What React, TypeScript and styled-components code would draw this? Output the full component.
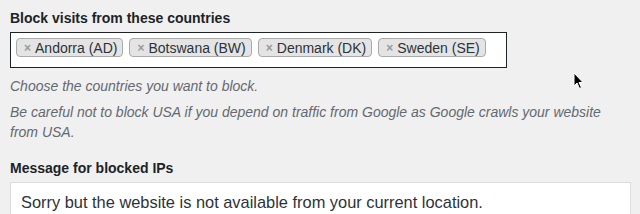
import styled, { createGlobalStyle } from "styled-components";

const GlobalStyle = createGlobalStyle`
  html, body {
    margin: 0;
    padding: 0;
    background: #f0f0f1;
  }
  body {
    font-family: "Liberation Sans", Arial, sans-serif;
    color: #1d2327;
  }
`;

const Page = styled.div`
  position: relative;
  width: 640px;
  height: 214px;
  overflow: hidden;
  padding: 8px 9px 0 10px;
  box-sizing: border-box;
`;

const Label = styled.div<{ $top?: number }>`
  font-size: 14px;
  font-weight: bold;
  line-height: 20px;
  margin-top: ${(p) => p.$top ?? 0}px;
  margin-bottom: 4px;
`;

const SelectBox = styled.div`
  width: 497px;
  height: 36px;
  box-sizing: border-box;
  border: 1px solid #1d2327;
  background: #fff;
  padding: 5px 5px;
  display: flex;
  gap: 6px;
  align-items: flex-start;
`;

const Tag = styled.span`
  display: inline-flex;
  align-items: center;
  height: 19px;
  box-sizing: border-box;
  padding: 0 5px 0 7px;
  background: #e4e4e4;
  border: 1px solid #aaa;
  border-radius: 4px;
  font-size: 14px;
  color: #2c3338;
  white-space: nowrap;
`;

const Remove = styled.span`
  color: #999;
  font-size: 12px;
  font-weight: bold;
  margin-right: 4px;
`;

const Description = styled.p<{ $top: number }>`
  margin: ${(p) => p.$top}px 0 0;
  font-size: 14px;
  font-style: italic;
  line-height: 20px;
  color: #646970;
  max-width: 618px;
`;

const MessageBox = styled.div`
  width: 621px;
  height: 60px;
  box-sizing: border-box;
  border: 1px solid #dcdcde;
  border-bottom: none;
  background: #fff;
  padding: 7px 10px;
  font-size: 16.4px;
  line-height: 24px;
  color: #2c3338;
`;

const Cursor = styled.svg`
  position: absolute;
  left: 573px;
  top: 72px;
`;

const countries = ["Andorra (AD)", "Botswana (BW)", "Denmark (DK)", "Sweden (SE)"];

export default function App() {
  return (
    <>
      <GlobalStyle />
      <Page>
        <Label>Block visits from these countries</Label>
        <SelectBox>
          {countries.map((c) => (
            <Tag key={c}>
              <Remove>×</Remove>
              {c}
            </Tag>
          ))}
        </SelectBox>
        <Description $top={8}>Choose the countries you want to block.</Description>
        <Description $top={6}>
          Be careful not to block USA if you depend on traffic from Google as Google crawls your
          website from USA.
        </Description>
        <Label $top={16}>Message for blocked IPs</Label>
        <MessageBox>Sorry but the website is not available from your current location.</MessageBox>
        <Cursor width="12" height="18" viewBox="0 0 12 18">
          <path d="M1 1 L1 14 L4 11 L6.5 16.5 L8.5 15.5 L6 10.5 L10 10.5 Z" fill="#000" stroke="#fff" strokeWidth="1" />
        </Cursor>
      </Page>
    </>
  );
}
